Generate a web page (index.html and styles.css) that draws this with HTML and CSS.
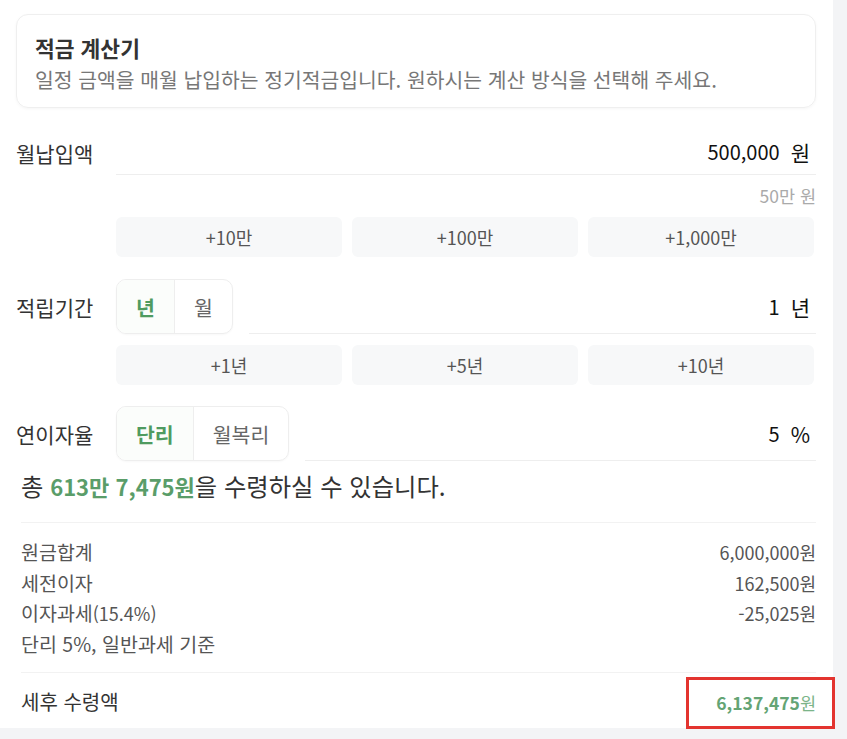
FILE: index.html
```html
<!DOCTYPE html>
<html lang="ko">
<head>
<meta charset="utf-8">
<title>적금 계산기</title>
<link rel="stylesheet" href="styles.css">
</head>
<body>
<main class="panel">
  <section class="intro">
    <h1 class="intro-title">적금 계산기</h1>
    <p class="intro-desc">일정 금액을 매월 납입하는 정기적금입니다. 원하시는 계산 방식을 선택해 주세요.</p>
  </section>

  <section class="field field-amount">
    <div class="field-label">월납입액</div>
    <div class="field-body">
      <div class="input-line"><span class="input-value">500,000</span><span class="input-unit">원</span></div>
      <div class="hint">50만 원</div>
      <div class="quick">
        <button class="quick-btn">+10만</button>
        <button class="quick-btn">+100만</button>
        <button class="quick-btn">+1,000만</button>
      </div>
    </div>
  </section>

  <section class="field field-toggle">
    <div class="field-label">적립기간</div>
    <div class="field-body">
      <div class="control-row">
        <div class="toggle">
          <span class="seg seg-active">년</span>
          <span class="seg">월</span>
        </div>
        <div class="input-line"><span class="input-value">1</span><span class="input-unit">년</span></div>
      </div>
      <div class="quick quick-gap">
        <button class="quick-btn">+1년</button>
        <button class="quick-btn">+5년</button>
        <button class="quick-btn">+10년</button>
      </div>
    </div>
  </section>

  <section class="field field-toggle field-rate">
    <div class="field-label">연이자율</div>
    <div class="field-body">
      <div class="control-row">
        <div class="toggle">
          <span class="seg seg-active">단리</span>
          <span class="seg">월복리</span>
        </div>
        <div class="input-line"><span class="input-value">5</span><span class="input-unit">%</span></div>
      </div>
    </div>
  </section>

  <section class="result">
    <p class="result-total">총 <strong class="green">613만 7,475원</strong>을 수령하실 수 있습니다.</p>
    <div class="breakdown">
      <div class="line"><span>원금합계</span><span class="amount">6,000,000원</span></div>
      <div class="line"><span>세전이자</span><span class="amount">162,500원</span></div>
      <div class="line"><span>이자과세<span class="amount">(15.4%)</span></span><span class="amount">-25,025원</span></div>
      <div class="line"><span>단리 5%, 일반과세 기준</span></div>
    </div>
    <div class="final">
      <span class="final-label">세후 수령액</span>
      <span class="final-value"><b>6,137,475</b>원</span>
    </div>
  </section>
</main>
<div class="highlight"></div>
</body>
</html>
```
FILE: styles.css
```css
html, body {
  margin: 0;
  padding: 0;
}
body {
  background: #f3f4f6;
  font-family: "Noto Sans CJK KR", "Noto Sans", sans-serif;
  color: #333;
  width: 847px;
  height: 739px;
  overflow: hidden;
  position: relative;
}
.panel {
  box-sizing: border-box;
  width: 833px;
  height: 728px;
  background: #fff;
  padding: 14px 17px 0 16px;
}
.intro {
  border: 1px solid #efefef;
  border-radius: 12px;
  box-shadow: 0 1px 3px rgba(0, 0, 0, 0.04);
  padding: 19px 18px 14px;
}
.intro-title {
  margin: 0;
  font-size: 21.5px;
  line-height: 27px;
  font-weight: 700;
  color: #333;
}
.intro-desc {
  margin: 4px 0 0;
  font-size: 20.4px;
  line-height: 28px;
  color: #777;
}
.field {
  display: grid;
  grid-template-columns: 100px 1fr;
  margin-top: 21px;
}
.field-toggle {
  margin-top: 22px;
}
.field-rate {
  margin-top: 21px;
}
.field-label {
  height: 48px;
  display: flex;
  align-items: center;
  font-size: 21px;
  color: #333;
}
.field-toggle .field-label {
  height: 55px;
}
.input-line {
  box-sizing: border-box;
  height: 46px;
  border-bottom: 1px solid #eeeeee;
  display: flex;
  justify-content: flex-end;
  align-items: center;
  gap: 11px;
  padding-right: 6px;
  font-size: 20px;
  color: #111;
}
.input-value {
  font-weight: 400;
}
.input-unit {
  font-size: 21px;
  font-weight: 400;
}
.hint {
  margin-top: 10px;
  text-align: right;
  font-size: 17.5px;
  line-height: 22px;
  color: #aaa;
}
.quick {
  display: grid;
  grid-template-columns: repeat(3, 1fr);
  gap: 10px;
  margin-top: 10px;
  padding-right: 2px;
}
.quick-gap {
  margin-top: 11px;
}
.quick-btn {
  height: 40px;
  border: none;
  border-radius: 6px;
  background: #f7f8f9;
  font-family: inherit;
  font-size: 18px;
  color: #555;
  padding: 0;
}
.control-row {
  display: flex;
  gap: 16px;
  align-items: flex-end;
}
.control-row .input-line {
  flex: 1;
  height: 55px;
  padding-top: 1px;
}
.toggle {
  box-sizing: border-box;
  height: 55px;
  display: flex;
  border: 1px solid #eeeeee;
  border-radius: 10px;
  overflow: hidden;
  box-shadow: 0 1px 2px rgba(0, 0, 0, 0.03);
}
.seg {
  display: flex;
  align-items: center;
  padding: 0 19px;
  font-size: 20.5px;
  color: #666;
}
.seg + .seg {
  border-left: 1px solid #eeeeee;
}
.seg-active {
  background: #fbfdfb;
  color: #4f9b60;
  font-weight: 700;
}
.result {
  margin-left: 5px;
}
.result-total {
  margin: 9px 0 0;
  font-size: 24.3px;
  line-height: 32px;
  color: #333;
}
.green {
  color: #5a9d69;
  font-weight: 700;
  font-size: 22px;
}
.breakdown {
  margin-top: 20px;
  border-top: 1px solid #f2f2f2;
  padding-top: 14px;
  padding-bottom: 13px;
}
.line {
  display: flex;
  justify-content: space-between;
  align-items: baseline;
  font-size: 19.5px;
  line-height: 30.5px;
  color: #555;
}
.amount {
  font-size: 18px;
}
.final {
  border-top: 1px solid #f2f2f2;
  padding-top: 14px;
  display: flex;
  justify-content: space-between;
  align-items: baseline;
  font-size: 20px;
  line-height: 30px;
  color: #333;
}
.final-value {
  font-size: 17.5px;
  color: #7bb489;
}
.final-value b {
  color: #64a474;
  font-weight: 700;
}
.highlight {
  position: absolute;
  left: 686px;
  top: 677px;
  width: 149px;
  height: 52px;
  box-sizing: border-box;
  border: 3px solid #e3342f;
}
```
